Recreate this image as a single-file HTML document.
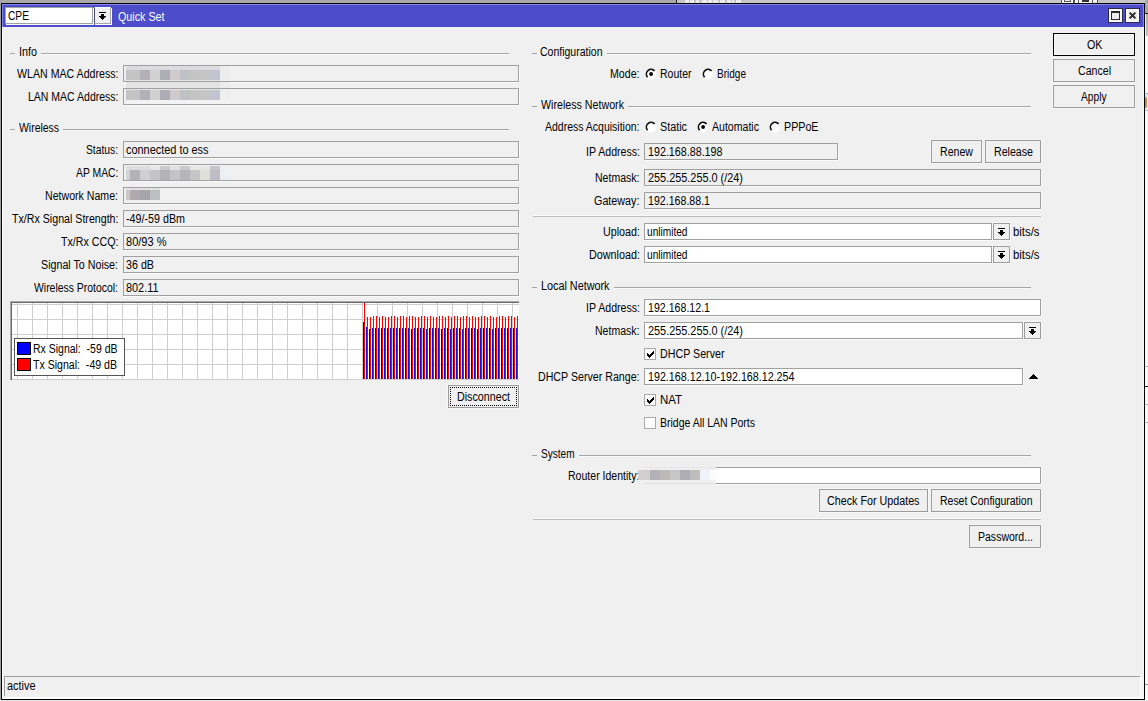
<!DOCTYPE html>
<html><head><meta charset="utf-8"><title>Quick Set</title>
<style>
html,body{margin:0;padding:0}
body{width:1148px;height:701px;overflow:hidden;position:relative;background:#f0f0f0;font-family:"Liberation Sans",sans-serif;font-size:12px;color:#000}
.t{position:absolute;white-space:pre;line-height:14px;height:14px;transform-origin:0 50%}
.f{position:absolute;box-sizing:border-box;border:1px solid #a0a0a0;box-shadow:1px 1px 0 #fbfbfb}
.w{background:#fff}
.b{position:absolute;box-sizing:border-box;border:1px solid #9c9c9c;background:#f0f0f0;box-shadow:0 0 0 1px #f8f8f8}
.ln{position:absolute;height:1px}
svg{display:block}
</style></head><body>
<div style="position:absolute;left:0px;top:0px;width:1148px;height:701px;background:#f4f4f4"></div>
<div style="position:absolute;left:0px;top:0px;width:676px;height:4px;background:#a9a9a9"></div>
<div style="position:absolute;left:676px;top:0px;width:1px;height:4px;background:#222"></div>
<div style="position:absolute;left:677px;top:0px;width:471px;height:4px;background:#c6c6c6"></div>
<div style="position:absolute;left:0px;top:0px;width:1px;height:701px;background:#a2a2a2"></div>
<div style="position:absolute;left:1145px;top:0px;width:3px;height:13px;background:#a9a9a9"></div>
<div style="position:absolute;left:1145px;top:13px;width:3px;height:1px;background:#222"></div>
<div style="position:absolute;left:1145px;top:14px;width:3px;height:22px;background:linear-gradient(#adadad,#c2c2c2)"></div>
<div style="position:absolute;left:1145px;top:36px;width:3px;height:665px;background:#f9f9f9"></div>
<div style="position:absolute;left:1145px;top:14px;width:1px;height:22px;background:#f0f0f0"></div>
<div style="position:absolute;left:1145px;top:93px;width:3px;height:1px;background:#b8b8b8"></div>
<div style="position:absolute;left:1145px;top:94px;width:3px;height:16px;background:#e2e8f0"></div>
<div style="position:absolute;left:1145px;top:97px;width:2px;height:11px;background:#c88a50;border-radius:0 3px 3px 0"></div>
<div style="position:absolute;left:1145px;top:110px;width:3px;height:1px;background:#c4c4c4"></div>
<div style="position:absolute;left:1145px;top:366px;width:3px;height:1px;background:#bbb"></div>
<div style="position:absolute;left:1145px;top:386px;width:3px;height:1px;background:#222"></div>
<div style="position:absolute;left:1145px;top:404px;width:3px;height:1px;background:#bbb"></div>
<div style="position:absolute;left:1145px;top:422px;width:3px;height:1px;background:#bbb"></div>
<div style="position:absolute;left:1145px;top:684px;width:3px;height:1px;background:#999"></div>
<div style="position:absolute;left:0px;top:700px;width:1148px;height:1px;background:#e4e4e4"></div>
<div style="position:absolute;left:685px;top:0px;width:4px;height:3px;background:#ececec"></div>
<div style="position:absolute;left:690px;top:0px;width:4px;height:3px;background:#ececec"></div>
<div style="position:absolute;left:696px;top:0px;width:3px;height:3px;background:#ececec"></div>
<div style="position:absolute;left:702px;top:0px;width:5px;height:3px;background:#ececec"></div>
<div style="position:absolute;left:708px;top:0px;width:4px;height:3px;background:#ececec"></div>
<div style="position:absolute;left:713px;top:0px;width:5px;height:3px;background:#ececec"></div>
<div style="position:absolute;left:720px;top:0px;width:5px;height:3px;background:#ececec"></div>
<div style="position:absolute;left:727px;top:0px;width:4px;height:3px;background:#ececec"></div>
<div style="position:absolute;left:732px;top:0px;width:2px;height:3px;background:#ececec"></div>
<div style="position:absolute;left:736px;top:0px;width:5px;height:3px;background:#ececec"></div>
<div style="position:absolute;left:1061px;top:0px;width:37px;height:3px;background:#555"></div>
<div style="position:absolute;left:1062px;top:0px;width:11px;height:3px;background:#f4f4f4"></div>
<div style="position:absolute;left:1064px;top:0px;width:7px;height:2px;background:#555"></div>
<div style="position:absolute;left:1065px;top:0px;width:5px;height:1px;background:#eee"></div>
<div style="position:absolute;left:1075px;top:0px;width:3px;height:3px;background:#f4f4f4"></div>
<div style="position:absolute;left:1079px;top:0px;width:13px;height:3px;background:#f4f4f4"></div>
<div style="position:absolute;left:1082px;top:0px;width:7px;height:2px;background:#333"></div>
<div style="position:absolute;left:1093px;top:0px;width:4px;height:3px;background:#f4f4f4"></div>
<div style="position:absolute;left:1px;top:3px;width:1144px;height:697px;background:#000"></div>
<div style="position:absolute;left:2px;top:4px;width:1142px;height:695px;background:#f0f0f0"></div>
<div style="position:absolute;left:2px;top:27px;width:1px;height:672px;background:#fdfdfd"></div>
<div style="position:absolute;left:2px;top:697px;width:1142px;height:2px;background:#fbfbfb"></div>
<div style="position:absolute;left:2px;top:4px;width:1142px;height:23px;background:#4d4dcc"></div>
<div style="position:absolute;left:2px;top:4px;width:1142px;height:1px;background:#8585ee"></div>
<div style="position:absolute;left:2px;top:4px;width:1px;height:23px;background:#8585ee"></div>
<div class="f w" style="left:5px;top:7px;width:88px;height:17px"></div>
<span class="t" style="left:7.50px;top:9px;transform:scaleX(0.8506);">CPE</span>
<div style="position:absolute;left:94px;top:7px;width:17px;height:17px;box-sizing:border-box;border:1px solid #a6a6a6;border-left-color:#4a4a78;border-top-color:#fafafa;background:#f0f0f0;box-shadow:1px 1px 0 #fff"></div>
<svg style="position:absolute;left:99px;top:12px" width="7" height="8" viewBox="0 0 7 8" shape-rendering="crispEdges"><rect x="0" y="0" width="7" height="1"/><rect x="2" y="2" width="3" height="2"/><rect x="0" y="4" width="7" height="1"/><rect x="1" y="5" width="5" height="1"/><rect x="2" y="6" width="3" height="1"/><rect x="3" y="7" width="1" height="1"/></svg>
<span class="t" style="left:117.50px;top:10px;transform:scaleX(0.8937);color:#fff;">Quick Set</span>
<div style="position:absolute;left:1108px;top:8px;width:15px;height:15px;box-sizing:border-box;border:1px solid #2a2a50;background:#ececec;box-shadow:inset 0 0 0 1px #fff,inset 0 0 0 2px #f7f7f7"></div>
<svg style="position:absolute;left:1111px;top:11px" width="9" height="9" viewBox="0 0 9 9" shape-rendering="crispEdges"><rect x="0.5" y="1" width="8" height="7.5" fill="none" stroke="#2a2a2a" stroke-width="1"/><rect x="0" y="0" width="9" height="2" fill="#2a2a2a"/></svg>
<div style="position:absolute;left:1125px;top:8px;width:15px;height:15px;box-sizing:border-box;border:1px solid #2a2a50;background:#ececec;box-shadow:inset 0 0 0 1px #fff,inset 0 0 0 2px #f7f7f7"></div>
<svg style="position:absolute;left:1128px;top:11px" width="9" height="9" viewBox="0 0 9 9"><path d="M1.6 1.6L7.4 7.4M7.4 1.6L1.6 7.4" stroke="#2a2a2a" stroke-width="1.9"/></svg>
<div style="position:absolute;left:1143px;top:4px;width:1px;height:23px;background:#8a8ae6"></div>
<div style="position:absolute;left:1143px;top:27px;width:1px;height:672px;background:#f8f8f8"></div>
<div class="b" style="left:1053px;top:33px;width:82px;height:23px;border-color:#000;box-shadow:inset 0 0 0 1px #f8f8f8"></div>
<span class="t" style="left:1086.50px;top:38px;transform:scaleX(0.8937);">OK</span>
<div class="b" style="left:1053px;top:59px;width:82px;height:23px;"></div>
<span class="t" style="left:1077.50px;top:64px;transform:scaleX(0.8833);">Cancel</span>
<div class="b" style="left:1053px;top:85px;width:82px;height:23px;"></div>
<span class="t" style="left:1081.00px;top:90px;transform:scaleX(0.8491);">Apply</span>
<div class="ln" style="left:10px;top:53px;width:5px;background:#a6a6a6"></div>
<span class="t" style="left:18.50px;top:45px;transform:scaleX(0.8993);">Info</span>
<div class="ln" style="left:41px;top:54px;width:468px;background:#f9f9f9"></div>
<div class="ln" style="left:41px;top:53px;width:468px;background:#a6a6a6"></div>
<span class="t" style="left:16.50px;top:67px;transform:scaleX(0.8849);">WLAN MAC Address:</span>
<div class="f" style="left:123px;top:65px;width:396px;height:17px"></div>
<span class="t" style="left:27.50px;top:90px;transform:scaleX(0.8755);">LAN MAC Address:</span>
<div class="f" style="left:123px;top:88px;width:396px;height:17px"></div>
<div class="ln" style="left:10px;top:129px;width:5px;background:#a6a6a6"></div>
<span class="t" style="left:18.50px;top:121px;transform:scaleX(0.8693);">Wireless</span>
<div class="ln" style="left:63px;top:130px;width:446px;background:#f9f9f9"></div>
<div class="ln" style="left:63px;top:129px;width:446px;background:#a6a6a6"></div>
<span class="t" style="left:86.00px;top:143px;transform:scaleX(0.8565);">Status:</span>
<div class="f" style="left:123px;top:141px;width:396px;height:17px"></div>
<span class="t" style="left:125.50px;top:143px;transform:scaleX(0.9092);">connected to ess</span>
<span class="t" style="left:75.50px;top:166px;transform:scaleX(0.8651);">AP MAC:</span>
<div class="f" style="left:123px;top:164px;width:396px;height:17px"></div>
<span class="t" style="left:45.00px;top:189px;transform:scaleX(0.8828);">Network Name:</span>
<div class="f" style="left:123px;top:187px;width:396px;height:17px"></div>
<span class="t" style="left:11.50px;top:212px;transform:scaleX(0.8870);">Tx/Rx Signal Strength:</span>
<div class="f" style="left:123px;top:210px;width:396px;height:17px"></div>
<span class="t" style="left:125.50px;top:212px;transform:scaleX(0.8935);">-49/-59 dBm</span>
<span class="t" style="left:60.50px;top:235px;transform:scaleX(0.8891);">Tx/Rx CCQ:</span>
<div class="f" style="left:123px;top:233px;width:396px;height:17px"></div>
<span class="t" style="left:125.50px;top:235px;transform:scaleX(0.9195);">80/93 %</span>
<span class="t" style="left:41.00px;top:258px;transform:scaleX(0.8902);">Signal To Noise:</span>
<div class="f" style="left:123px;top:256px;width:396px;height:17px"></div>
<span class="t" style="left:125.50px;top:258px;transform:scaleX(0.8929);">36 dB</span>
<span class="t" style="left:34.00px;top:281px;transform:scaleX(0.8686);">Wireless Protocol:</span>
<div class="f" style="left:123px;top:279px;width:396px;height:17px"></div>
<span class="t" style="left:125.50px;top:281px;transform:scaleX(0.9075);">802.11</span>
<div style="position:absolute;left:126px;top:66px;width:94px;height:4px;background:#dcdcde"></div>
<div style="position:absolute;left:220px;top:66px;width:10px;height:4px;background:#ededed"></div>
<div style="position:absolute;left:126px;top:70px;width:14px;height:10px;background:#c4c4c4"></div>
<div style="position:absolute;left:140px;top:70px;width:10px;height:10px;background:#b4b0b8"></div>
<div style="position:absolute;left:150px;top:70px;width:10px;height:10px;background:#d1d1d1"></div>
<div style="position:absolute;left:160px;top:70px;width:10px;height:10px;background:#adadb5"></div>
<div style="position:absolute;left:170px;top:70px;width:10px;height:10px;background:#cfcacc"></div>
<div style="position:absolute;left:180px;top:70px;width:10px;height:10px;background:#bfc1c4"></div>
<div style="position:absolute;left:190px;top:70px;width:10px;height:10px;background:#c4c4c4"></div>
<div style="position:absolute;left:200px;top:70px;width:10px;height:10px;background:#c5c5c5"></div>
<div style="position:absolute;left:210px;top:70px;width:10px;height:10px;background:#c4c4d0"></div>
<div style="position:absolute;left:220px;top:70px;width:10px;height:10px;background:#eeeeee"></div>
<div style="position:absolute;left:126px;top:80px;width:94px;height:1px;background:#e4e4e4"></div>
<div style="position:absolute;left:126px;top:82px;width:94px;height:6px;background:#e4e4e4"></div>
<div style="position:absolute;left:220px;top:82px;width:10px;height:6px;background:#ececec"></div>
<div style="position:absolute;left:126px;top:89px;width:94px;height:1px;background:#e4e4e4"></div>
<div style="position:absolute;left:126px;top:90px;width:14px;height:10px;background:#c4c4c4"></div>
<div style="position:absolute;left:140px;top:90px;width:10px;height:10px;background:#b4b0b8"></div>
<div style="position:absolute;left:150px;top:90px;width:10px;height:10px;background:#d1d1d1"></div>
<div style="position:absolute;left:160px;top:90px;width:10px;height:10px;background:#adadb5"></div>
<div style="position:absolute;left:170px;top:90px;width:10px;height:10px;background:#cfcacc"></div>
<div style="position:absolute;left:180px;top:90px;width:10px;height:10px;background:#bfc1c4"></div>
<div style="position:absolute;left:190px;top:90px;width:10px;height:10px;background:#c4c4c4"></div>
<div style="position:absolute;left:200px;top:90px;width:10px;height:10px;background:#c5c5c5"></div>
<div style="position:absolute;left:210px;top:90px;width:10px;height:10px;background:#c4c4d0"></div>
<div style="position:absolute;left:220px;top:90px;width:10px;height:10px;background:#eeeeee"></div>
<div style="position:absolute;left:126px;top:100px;width:104px;height:4px;background:#f3f3f3"></div>
<div style="position:absolute;left:126px;top:166px;width:24px;height:4px;background:#dedede"></div>
<div style="position:absolute;left:150px;top:166px;width:10px;height:4px;background:#e6e6e6"></div>
<div style="position:absolute;left:160px;top:166px;width:10px;height:4px;background:#cacaca"></div>
<div style="position:absolute;left:170px;top:166px;width:10px;height:4px;background:#e2e2e2"></div>
<div style="position:absolute;left:180px;top:166px;width:10px;height:4px;background:#cacaca"></div>
<div style="position:absolute;left:190px;top:166px;width:20px;height:4px;background:#e6e6e6"></div>
<div style="position:absolute;left:210px;top:166px;width:10px;height:4px;background:#c8c4cc"></div>
<div style="position:absolute;left:220px;top:166px;width:10px;height:4px;background:#eef0f2"></div>
<div style="position:absolute;left:126px;top:170px;width:4px;height:10px;background:#d4d4d4"></div>
<div style="position:absolute;left:130px;top:170px;width:10px;height:10px;background:#b4b4b8"></div>
<div style="position:absolute;left:140px;top:170px;width:10px;height:10px;background:#d0d0d4"></div>
<div style="position:absolute;left:150px;top:170px;width:10px;height:10px;background:#c4c4c6"></div>
<div style="position:absolute;left:160px;top:170px;width:10px;height:10px;background:#b4b4b6"></div>
<div style="position:absolute;left:170px;top:170px;width:10px;height:10px;background:#c4c4c6"></div>
<div style="position:absolute;left:180px;top:170px;width:10px;height:10px;background:#b6b6ba"></div>
<div style="position:absolute;left:190px;top:170px;width:10px;height:10px;background:#c4c6c8"></div>
<div style="position:absolute;left:200px;top:170px;width:10px;height:10px;background:#e0dfda"></div>
<div style="position:absolute;left:210px;top:170px;width:10px;height:10px;background:#c0bcc8"></div>
<div style="position:absolute;left:220px;top:170px;width:10px;height:10px;background:#ecf0f4"></div>
<div style="position:absolute;left:126px;top:188px;width:34px;height:2px;background:#e2e2e2"></div>
<div style="position:absolute;left:126px;top:190px;width:4px;height:10px;background:#c8c8c6"></div>
<div style="position:absolute;left:130px;top:190px;width:10px;height:10px;background:#b0a9ad"></div>
<div style="position:absolute;left:140px;top:190px;width:10px;height:10px;background:#a5a5ad"></div>
<div style="position:absolute;left:150px;top:190px;width:10px;height:10px;background:#bcc0c2"></div>
<div style="position:absolute;left:10px;top:301px;width:509px;height:79px;background:#ababab"></div>
<div style="position:absolute;left:11px;top:302px;width:508px;height:78px;background:#fff"></div>
<svg style="position:absolute;left:11px;top:302px" width="508" height="78" shape-rendering="crispEdges"><rect x="6" y="0" width="1" height="78" fill="#cecece"/><rect x="21" y="0" width="1" height="78" fill="#cecece"/><rect x="36" y="0" width="1" height="78" fill="#cecece"/><rect x="51" y="0" width="1" height="78" fill="#cecece"/><rect x="66" y="0" width="1" height="78" fill="#cecece"/><rect x="81" y="0" width="1" height="78" fill="#cecece"/><rect x="96" y="0" width="1" height="78" fill="#cecece"/><rect x="111" y="0" width="1" height="78" fill="#cecece"/><rect x="126" y="0" width="1" height="78" fill="#cecece"/><rect x="141" y="0" width="1" height="78" fill="#cecece"/><rect x="156" y="0" width="1" height="78" fill="#cecece"/><rect x="171" y="0" width="1" height="78" fill="#cecece"/><rect x="186" y="0" width="1" height="78" fill="#cecece"/><rect x="201" y="0" width="1" height="78" fill="#cecece"/><rect x="216" y="0" width="1" height="78" fill="#cecece"/><rect x="231" y="0" width="1" height="78" fill="#cecece"/><rect x="246" y="0" width="1" height="78" fill="#cecece"/><rect x="261" y="0" width="1" height="78" fill="#cecece"/><rect x="276" y="0" width="1" height="78" fill="#cecece"/><rect x="291" y="0" width="1" height="78" fill="#cecece"/><rect x="306" y="0" width="1" height="78" fill="#cecece"/><rect x="321" y="0" width="1" height="78" fill="#cecece"/><rect x="336" y="0" width="1" height="78" fill="#cecece"/><rect x="351" y="0" width="1" height="78" fill="#cecece"/><rect x="366" y="0" width="1" height="78" fill="#cecece"/><rect x="381" y="0" width="1" height="78" fill="#cecece"/><rect x="396" y="0" width="1" height="78" fill="#cecece"/><rect x="411" y="0" width="1" height="78" fill="#cecece"/><rect x="426" y="0" width="1" height="78" fill="#cecece"/><rect x="441" y="0" width="1" height="78" fill="#cecece"/><rect x="456" y="0" width="1" height="78" fill="#cecece"/><rect x="471" y="0" width="1" height="78" fill="#cecece"/><rect x="486" y="0" width="1" height="78" fill="#cecece"/><rect x="501" y="0" width="1" height="78" fill="#cecece"/><rect x="0" y="2" width="508" height="1" fill="#cecece"/><rect x="0" y="17" width="508" height="1" fill="#cecece"/><rect x="0" y="32" width="508" height="1" fill="#cecece"/><rect x="0" y="47" width="508" height="1" fill="#cecece"/><rect x="0" y="62" width="508" height="1" fill="#cecece"/><rect x="0" y="77" width="508" height="1" fill="#cecece"/><rect x="352" y="20" width="1" height="57" fill="#0000e6"/><rect x="353" y="0" width="1" height="77" fill="#f00"/><rect x="355" y="25" width="1" height="52" fill="#0000e6"/><rect x="356" y="15" width="1" height="62" fill="#f00"/><rect x="358" y="27" width="1" height="50" fill="#0000e6"/><rect x="359" y="15" width="1" height="62" fill="#f00"/><rect x="361" y="26" width="1" height="51" fill="#0000e6"/><rect x="362" y="14" width="1" height="63" fill="#f00"/><rect x="364" y="26" width="1" height="51" fill="#0000e6"/><rect x="365" y="14" width="1" height="63" fill="#f00"/><rect x="367" y="26" width="1" height="51" fill="#0000e6"/><rect x="368" y="15" width="1" height="62" fill="#f00"/><rect x="370" y="26" width="1" height="51" fill="#0000e6"/><rect x="371" y="14" width="1" height="63" fill="#f00"/><rect x="373" y="26" width="1" height="51" fill="#0000e6"/><rect x="374" y="15" width="1" height="62" fill="#f00"/><rect x="376" y="26" width="1" height="51" fill="#0000e6"/><rect x="377" y="15" width="1" height="62" fill="#f00"/><rect x="379" y="26" width="1" height="51" fill="#0000e6"/><rect x="380" y="14" width="1" height="63" fill="#f00"/><rect x="382" y="26" width="1" height="51" fill="#0000e6"/><rect x="383" y="14" width="1" height="63" fill="#f00"/><rect x="385" y="26" width="1" height="51" fill="#0000e6"/><rect x="386" y="15" width="1" height="62" fill="#f00"/><rect x="388" y="26" width="1" height="51" fill="#0000e6"/><rect x="389" y="14" width="1" height="63" fill="#f00"/><rect x="391" y="26" width="1" height="51" fill="#0000e6"/><rect x="392" y="14" width="1" height="63" fill="#f00"/><rect x="394" y="26" width="1" height="51" fill="#0000e6"/><rect x="395" y="15" width="1" height="62" fill="#f00"/><rect x="397" y="26" width="1" height="51" fill="#0000e6"/><rect x="398" y="14" width="1" height="63" fill="#f00"/><rect x="400" y="27" width="1" height="50" fill="#0000e6"/><rect x="401" y="14" width="1" height="63" fill="#f00"/><rect x="403" y="26" width="1" height="51" fill="#0000e6"/><rect x="404" y="15" width="1" height="62" fill="#f00"/><rect x="406" y="26" width="1" height="51" fill="#0000e6"/><rect x="407" y="15" width="1" height="62" fill="#f00"/><rect x="409" y="26" width="1" height="51" fill="#0000e6"/><rect x="410" y="14" width="1" height="63" fill="#f00"/><rect x="412" y="26" width="1" height="51" fill="#0000e6"/><rect x="413" y="14" width="1" height="63" fill="#f00"/><rect x="415" y="27" width="1" height="50" fill="#0000e6"/><rect x="416" y="15" width="1" height="62" fill="#f00"/><rect x="418" y="26" width="1" height="51" fill="#0000e6"/><rect x="419" y="14" width="1" height="63" fill="#f00"/><rect x="421" y="26" width="1" height="51" fill="#0000e6"/><rect x="422" y="15" width="1" height="62" fill="#f00"/><rect x="424" y="26" width="1" height="51" fill="#0000e6"/><rect x="425" y="15" width="1" height="62" fill="#f00"/><rect x="427" y="26" width="1" height="51" fill="#0000e6"/><rect x="428" y="14" width="1" height="63" fill="#f00"/><rect x="430" y="27" width="1" height="50" fill="#0000e6"/><rect x="431" y="14" width="1" height="63" fill="#f00"/><rect x="433" y="26" width="1" height="51" fill="#0000e6"/><rect x="434" y="15" width="1" height="62" fill="#f00"/><rect x="436" y="26" width="1" height="51" fill="#0000e6"/><rect x="437" y="14" width="1" height="63" fill="#f00"/><rect x="439" y="27" width="1" height="50" fill="#0000e6"/><rect x="440" y="15" width="1" height="62" fill="#f00"/><rect x="442" y="26" width="1" height="51" fill="#0000e6"/><rect x="443" y="14" width="1" height="63" fill="#f00"/><rect x="445" y="26" width="1" height="51" fill="#0000e6"/><rect x="446" y="14" width="1" height="63" fill="#f00"/><rect x="448" y="26" width="1" height="51" fill="#0000e6"/><rect x="449" y="15" width="1" height="62" fill="#f00"/><rect x="451" y="27" width="1" height="50" fill="#0000e6"/><rect x="452" y="14" width="1" height="63" fill="#f00"/><rect x="454" y="26" width="1" height="51" fill="#0000e6"/><rect x="455" y="14" width="1" height="63" fill="#f00"/><rect x="457" y="26" width="1" height="51" fill="#0000e6"/><rect x="458" y="15" width="1" height="62" fill="#f00"/><rect x="460" y="26" width="1" height="51" fill="#0000e6"/><rect x="461" y="14" width="1" height="63" fill="#f00"/><rect x="463" y="26" width="1" height="51" fill="#0000e6"/><rect x="464" y="15" width="1" height="62" fill="#f00"/><rect x="466" y="27" width="1" height="50" fill="#0000e6"/><rect x="467" y="15" width="1" height="62" fill="#f00"/><rect x="469" y="26" width="1" height="51" fill="#0000e6"/><rect x="470" y="14" width="1" height="63" fill="#f00"/><rect x="472" y="26" width="1" height="51" fill="#0000e6"/><rect x="473" y="14" width="1" height="63" fill="#f00"/><rect x="475" y="26" width="1" height="51" fill="#0000e6"/><rect x="476" y="15" width="1" height="62" fill="#f00"/><rect x="478" y="26" width="1" height="51" fill="#0000e6"/><rect x="479" y="14" width="1" height="63" fill="#f00"/><rect x="481" y="27" width="1" height="50" fill="#0000e6"/><rect x="482" y="15" width="1" height="62" fill="#f00"/><rect x="484" y="26" width="1" height="51" fill="#0000e6"/><rect x="485" y="15" width="1" height="62" fill="#f00"/><rect x="487" y="26" width="1" height="51" fill="#0000e6"/><rect x="488" y="14" width="1" height="63" fill="#f00"/><rect x="490" y="26" width="1" height="51" fill="#0000e6"/><rect x="491" y="14" width="1" height="63" fill="#f00"/><rect x="493" y="26" width="1" height="51" fill="#0000e6"/><rect x="494" y="15" width="1" height="62" fill="#f00"/><rect x="496" y="26" width="1" height="51" fill="#0000e6"/><rect x="497" y="14" width="1" height="63" fill="#f00"/><rect x="499" y="26" width="1" height="51" fill="#0000e6"/><rect x="500" y="14" width="1" height="63" fill="#f00"/><rect x="502" y="26" width="1" height="51" fill="#0000e6"/><rect x="503" y="15" width="1" height="62" fill="#f00"/><rect x="505" y="26" width="1" height="51" fill="#0000e6"/><rect x="506" y="14" width="1" height="63" fill="#f00"/><rect x="0" y="0" width="508" height="1" fill="#696969"/><rect x="0" y="0" width="1" height="78" fill="#696969"/></svg>
<div style="position:absolute;left:14px;top:338px;width:111px;height:38px;box-sizing:border-box;border:1px solid #555;background:#fff"></div>
<div style="position:absolute;left:17px;top:342px;width:14px;height:13px;box-sizing:border-box;border:1px solid #000;background:#0000ff"></div>
<div style="position:absolute;left:17px;top:358px;width:14px;height:13px;box-sizing:border-box;border:1px solid #000;background:#ff0000"></div>
<span class="t" style="left:33.00px;top:342px;transform:scaleX(0.8737);">Rx Signal:  -59 dB</span>
<span class="t" style="left:33.00px;top:358px;transform:scaleX(0.8806);">Tx Signal:  -49 dB</span>
<div class="b" style="left:448px;top:385px;width:71px;height:23px;"></div>
<span class="t" style="left:457.00px;top:390px;transform:scaleX(0.8926);">Disconnect</span>
<div style="position:absolute;left:450px;top:387px;width:67px;height:19px;box-sizing:border-box;border:1px dotted #000"></div>
<div class="ln" style="left:532px;top:53px;width:5px;background:#a6a6a6"></div>
<span class="t" style="left:540.00px;top:45px;transform:scaleX(0.8755);">Configuration</span>
<div class="ln" style="left:607px;top:54px;width:424px;background:#f9f9f9"></div>
<div class="ln" style="left:607px;top:53px;width:424px;background:#a6a6a6"></div>
<span class="t" style="left:610.00px;top:67px;transform:scaleX(0.8843);">Mode:</span>
<svg style="position:absolute;left:645px;top:68px" width="13" height="13" viewBox="0 0 13 13"><circle cx="6" cy="6.2" r="5.4" fill="#fff"/><path d="M2.6 9.2 A4.5 4.5 0 0 1 9.6 3.0" fill="none" stroke="#111" stroke-width="1.7"/><circle cx="6.1" cy="6" r="1.9" fill="#000"/></svg>
<span class="t" style="left:660.00px;top:67px;transform:scaleX(0.8742);">Router</span>
<svg style="position:absolute;left:702px;top:68px" width="13" height="13" viewBox="0 0 13 13"><circle cx="6" cy="6.2" r="5.4" fill="#fff"/><path d="M2.6 9.2 A4.5 4.5 0 0 1 9.6 3.0" fill="none" stroke="#111" stroke-width="1.7"/></svg>
<span class="t" style="left:717.00px;top:67px;transform:scaleX(0.8360);">Bridge</span>
<div class="ln" style="left:532px;top:106px;width:5px;background:#a6a6a6"></div>
<span class="t" style="left:540.50px;top:98px;transform:scaleX(0.8890);">Wireless Network</span>
<div class="ln" style="left:628px;top:107px;width:403px;background:#f9f9f9"></div>
<div class="ln" style="left:628px;top:106px;width:403px;background:#a6a6a6"></div>
<span class="t" style="left:545.00px;top:120px;transform:scaleX(0.8745);">Address Acquisition:</span>
<svg style="position:absolute;left:645px;top:121px" width="13" height="13" viewBox="0 0 13 13"><circle cx="6" cy="6.2" r="5.4" fill="#fff"/><path d="M2.6 9.2 A4.5 4.5 0 0 1 9.6 3.0" fill="none" stroke="#111" stroke-width="1.7"/></svg>
<span class="t" style="left:660.00px;top:120px;transform:scaleX(0.8995);">Static</span>
<svg style="position:absolute;left:697px;top:121px" width="13" height="13" viewBox="0 0 13 13"><circle cx="6" cy="6.2" r="5.4" fill="#fff"/><path d="M2.6 9.2 A4.5 4.5 0 0 1 9.6 3.0" fill="none" stroke="#111" stroke-width="1.7"/><circle cx="6.1" cy="6" r="1.9" fill="#000"/></svg>
<span class="t" style="left:712.00px;top:120px;transform:scaleX(0.8808);">Automatic</span>
<svg style="position:absolute;left:769px;top:121px" width="13" height="13" viewBox="0 0 13 13"><circle cx="6" cy="6.2" r="5.4" fill="#fff"/><path d="M2.6 9.2 A4.5 4.5 0 0 1 9.6 3.0" fill="none" stroke="#111" stroke-width="1.7"/></svg>
<span class="t" style="left:783.50px;top:120px;transform:scaleX(0.8914);">PPPoE</span>
<span class="t" style="left:585.50px;top:145px;transform:scaleX(0.8830);">IP Address:</span>
<div class="f" style="left:644px;top:143px;width:194px;height:17px"></div>
<span class="t" style="left:647.50px;top:145px;transform:scaleX(0.8931);">192.168.88.198</span>
<div class="b" style="left:931px;top:140px;width:51px;height:23px;"></div>
<span class="t" style="left:940.00px;top:145px;transform:scaleX(0.8833);">Renew</span>
<div class="b" style="left:985px;top:140px;width:56px;height:23px;"></div>
<span class="t" style="left:994.00px;top:145px;transform:scaleX(0.8857);">Release</span>
<span class="t" style="left:595.00px;top:171px;transform:scaleX(0.8779);">Netmask:</span>
<div class="f" style="left:644px;top:169px;width:397px;height:17px"></div>
<span class="t" style="left:647.50px;top:171px;transform:scaleX(0.9069);">255.255.255.0 (/24)</span>
<span class="t" style="left:594.00px;top:194px;transform:scaleX(0.8974);">Gateway:</span>
<div class="f" style="left:644px;top:192px;width:397px;height:17px"></div>
<span class="t" style="left:647.50px;top:194px;transform:scaleX(0.8847);">192.168.88.1</span>
<div class="ln" style="left:533px;top:215px;width:508px;background:#fbfbfb"></div>
<div class="ln" style="left:533px;top:216px;width:508px;background:#bcbcbc"></div>
<span class="t" style="left:602.50px;top:225px;transform:scaleX(0.8943);">Upload:</span>
<div class="f w" style="left:644px;top:223px;width:348px;height:17px"></div>
<span class="t" style="left:646.50px;top:225px;transform:scaleX(0.8432);">unlimited</span>
<div class="b" style="left:993px;top:223px;width:17px;height:17px"></div>
<svg style="position:absolute;left:998px;top:228px" width="7" height="8" viewBox="0 0 7 8" shape-rendering="crispEdges"><rect x="0" y="0" width="7" height="1" fill="#000"/><rect x="2" y="2" width="3" height="2" fill="#000"/><rect x="0" y="4" width="7" height="1" fill="#000"/><rect x="1" y="5" width="5" height="1" fill="#000"/><rect x="2" y="6" width="3" height="1" fill="#000"/><rect x="3" y="7" width="1" height="1" fill="#000"/></svg>
<span class="t" style="left:1012.50px;top:225px;transform:scaleX(0.9459);">bits/s</span>
<span class="t" style="left:588.50px;top:248px;transform:scaleX(0.8994);">Download:</span>
<div class="f w" style="left:644px;top:246px;width:348px;height:17px"></div>
<span class="t" style="left:646.50px;top:248px;transform:scaleX(0.8432);">unlimited</span>
<div class="b" style="left:993px;top:246px;width:17px;height:17px"></div>
<svg style="position:absolute;left:998px;top:251px" width="7" height="8" viewBox="0 0 7 8" shape-rendering="crispEdges"><rect x="0" y="0" width="7" height="1" fill="#000"/><rect x="2" y="2" width="3" height="2" fill="#000"/><rect x="0" y="4" width="7" height="1" fill="#000"/><rect x="1" y="5" width="5" height="1" fill="#000"/><rect x="2" y="6" width="3" height="1" fill="#000"/><rect x="3" y="7" width="1" height="1" fill="#000"/></svg>
<span class="t" style="left:1012.50px;top:248px;transform:scaleX(0.9459);">bits/s</span>
<div class="ln" style="left:532px;top:287px;width:5px;background:#a6a6a6"></div>
<span class="t" style="left:541.00px;top:279px;transform:scaleX(0.9009);">Local Network</span>
<div class="ln" style="left:614px;top:288px;width:417px;background:#f9f9f9"></div>
<div class="ln" style="left:614px;top:287px;width:417px;background:#a6a6a6"></div>
<span class="t" style="left:585.50px;top:301px;transform:scaleX(0.8830);">IP Address:</span>
<div class="f w" style="left:644px;top:299px;width:397px;height:17px"></div>
<span class="t" style="left:647.50px;top:301px;transform:scaleX(0.8847);">192.168.12.1</span>
<span class="t" style="left:595.00px;top:324px;transform:scaleX(0.8779);">Netmask:</span>
<div class="f w" style="left:644px;top:322px;width:379px;height:17px"></div>
<span class="t" style="left:647.50px;top:324px;transform:scaleX(0.9069);">255.255.255.0 (/24)</span>
<div class="b" style="left:1024px;top:322px;width:17px;height:17px"></div>
<svg style="position:absolute;left:1029px;top:327px" width="7" height="8" viewBox="0 0 7 8" shape-rendering="crispEdges"><rect x="0" y="0" width="7" height="1" fill="#000"/><rect x="2" y="2" width="3" height="2" fill="#000"/><rect x="0" y="4" width="7" height="1" fill="#000"/><rect x="1" y="5" width="5" height="1" fill="#000"/><rect x="2" y="6" width="3" height="1" fill="#000"/><rect x="3" y="7" width="1" height="1" fill="#000"/></svg>
<div style="position:absolute;left:644px;top:348px;width:12px;height:12px;box-sizing:border-box;border:1px solid #a8a8a8;background:#fff"></div>
<svg style="position:absolute;left:647px;top:351px" width="7" height="7" viewBox="0 0 7 7" shape-rendering="crispEdges"><path d="M0 2v3h1v1h1v1h1v-1h1v-1h1v-1h1v-1h1v-3h-1v1h-1v1h-1v1h-1v1h-1v-1h-1v-1z" fill="#000"/></svg>
<span class="t" style="left:660.00px;top:347px;transform:scaleX(0.8900);">DHCP Server</span>
<span class="t" style="left:538.00px;top:370px;transform:scaleX(0.8865);">DHCP Server Range:</span>
<div class="f w" style="left:644px;top:368px;width:379px;height:17px"></div>
<span class="t" style="left:647.50px;top:370px;transform:scaleX(0.8924);">192.168.12.10-192.168.12.254</span>
<svg style="position:absolute;left:1029px;top:374px" width="9" height="5" viewBox="0 0 9 5" shape-rendering="crispEdges"><path d="M4 0h1v1h1v1h1v1h1v1h1v1h-9v-1h1v-1h1v-1h1v-1h1z"/></svg>
<div style="position:absolute;left:644px;top:394px;width:12px;height:12px;box-sizing:border-box;border:1px solid #a8a8a8;background:#fff"></div>
<svg style="position:absolute;left:647px;top:397px" width="7" height="7" viewBox="0 0 7 7" shape-rendering="crispEdges"><path d="M0 2v3h1v1h1v1h1v-1h1v-1h1v-1h1v-1h1v-3h-1v1h-1v1h-1v1h-1v1h-1v-1h-1v-1z" fill="#000"/></svg>
<span class="t" style="left:660.00px;top:393px;transform:scaleX(0.9520);">NAT</span>
<div style="position:absolute;left:644px;top:417px;width:12px;height:12px;box-sizing:border-box;border:1px solid #a8a8a8;background:#fff"></div>
<span class="t" style="left:660.00px;top:416px;transform:scaleX(0.8738);">Bridge All LAN Ports</span>
<div class="ln" style="left:532px;top:455px;width:5px;background:#a6a6a6"></div>
<span class="t" style="left:541.00px;top:447px;transform:scaleX(0.8372);">System</span>
<div class="ln" style="left:579px;top:456px;width:452px;background:#f9f9f9"></div>
<div class="ln" style="left:579px;top:455px;width:452px;background:#a6a6a6"></div>
<span class="t" style="left:568.00px;top:469px;transform:scaleX(0.8786);">Router Identity:</span>
<div class="f w" style="left:644px;top:467px;width:397px;height:17px"></div>
<div style="position:absolute;left:638px;top:460px;width:78px;height:10px;background:#efefef"></div>
<div style="position:absolute;left:644px;top:467px;width:72px;height:1px;background:#e6e6e6"></div>
<div style="position:absolute;left:638px;top:470px;width:12px;height:10px;background:#d2cecd"></div>
<div style="position:absolute;left:650px;top:470px;width:10px;height:10px;background:#b4b2b8"></div>
<div style="position:absolute;left:660px;top:470px;width:10px;height:10px;background:#bcbab8"></div>
<div style="position:absolute;left:670px;top:470px;width:10px;height:10px;background:#c6c6c6"></div>
<div style="position:absolute;left:680px;top:470px;width:10px;height:10px;background:#adadb3"></div>
<div style="position:absolute;left:690px;top:470px;width:10px;height:10px;background:#c0bebc"></div>
<div style="position:absolute;left:700px;top:470px;width:10px;height:10px;background:#f0f4fa"></div>
<div style="position:absolute;left:710px;top:470px;width:6px;height:10px;background:#fcfcfc"></div>
<div style="position:absolute;left:638px;top:480px;width:78px;height:5px;background:#f0f0f0"></div>
<div style="position:absolute;left:644px;top:483px;width:72px;height:1px;background:#dedede"></div>
<div class="b" style="left:819px;top:489px;width:109px;height:23px;"></div>
<span class="t" style="left:827.00px;top:494px;transform:scaleX(0.8947);">Check For Updates</span>
<div class="b" style="left:931px;top:489px;width:110px;height:23px;"></div>
<span class="t" style="left:940.00px;top:494px;transform:scaleX(0.8721);">Reset Configuration</span>
<div class="ln" style="left:533px;top:518px;width:508px;background:#fbfbfb"></div>
<div class="ln" style="left:533px;top:519px;width:508px;background:#bcbcbc"></div>
<div class="b" style="left:969px;top:525px;width:72px;height:23px;"></div>
<span class="t" style="left:978.00px;top:530px;transform:scaleX(0.8771);">Password...</span>
<div class="ln" style="left:4px;top:676px;width:1136px;background:#a0a0a0"></div>
<div style="position:absolute;left:1140px;top:676px;width:2px;height:21px;background:#fafafa"></div>
<div style="position:absolute;left:4px;top:677px;width:1px;height:19px;background:#a0a0a0"></div>
<span class="t" style="left:6.50px;top:679px;transform:scaleX(0.9088);">active</span>
</body></html>
